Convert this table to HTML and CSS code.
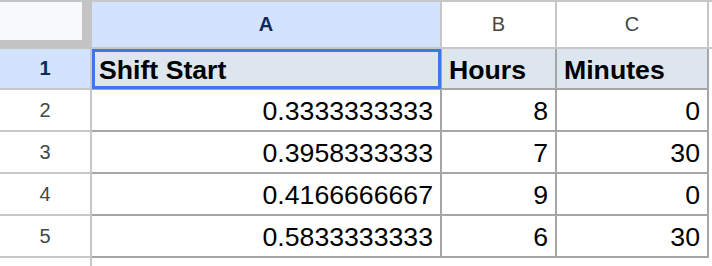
FILE: index.html
```html
<!DOCTYPE html>
<html>
<head>
<meta charset="utf-8">
<link rel="stylesheet" href="styles.css">
</head>
<body>
<div class="sheet">
  <div class="corner"><div class="corner-in"></div></div>
  <div class="ch ch-sel">A</div>
  <div class="ch">B</div>
  <div class="ch">C</div>
  <div class="ch ch-rest"></div>

  <div class="rh rh-sel">1</div>
  <div class="cell head-cell selected">Shift Start</div>
  <div class="cell head-cell">Hours</div>
  <div class="cell head-cell">Minutes</div>
  <div class="rest"></div>

  <div class="rh">2</div>
  <div class="cell num">0.3333333333</div>
  <div class="cell num">8</div>
  <div class="cell num">0</div>
  <div class="rest"></div>

  <div class="rh">3</div>
  <div class="cell num">0.3958333333</div>
  <div class="cell num">7</div>
  <div class="cell num">30</div>
  <div class="rest"></div>

  <div class="rh">4</div>
  <div class="cell num">0.4166666667</div>
  <div class="cell num">9</div>
  <div class="cell num">0</div>
  <div class="rest"></div>

  <div class="rh">5</div>
  <div class="cell num">0.5833333333</div>
  <div class="cell num">6</div>
  <div class="cell num">30</div>
  <div class="rest"></div>

  <div class="rh rh-empty"></div>
</div>
</body>
</html>
```

FILE: styles.css
```css
* { box-sizing: border-box; }
html, body { margin: 0; padding: 0; background: #ffffff; }
body { width: 712px; height: 266px; overflow: hidden; }

.sheet {
  display: grid;
  grid-template-columns: 92px 350px 115px 152px 1fr;
  grid-template-rows: 49px 41px 42px 42px 42px 42px 8px;
  font-family: "Liberation Sans", Arial, sans-serif;
}

.corner {
  background: #c4c4c4;
  padding-top: 2px;
}
.corner-in {
  width: 82px;
  height: 38px;
  background: #f8f9fa;
}

.ch {
  border-top: 2px solid #c7c7c7;
  border-right: 2px solid #c7c7c7;
  border-bottom: 2px solid #c7c7c7;
  display: flex;
  align-items: center;
  justify-content: center;
  font-size: 20px;
  color: #444746;
  background: #ffffff;
}
.ch-sel {
  background: #d3e3fd;
  color: #0b2a5e;
  font-weight: bold;
}
.ch-rest { border-right: none; }

.rh {
  border-right: 2px solid #c7c7c7;
  border-bottom: 2px solid #c7c7c7;
  display: flex;
  align-items: center;
  justify-content: center;
  font-size: 20px;
  color: #444746;
  background: #ffffff;
}
.rh-sel {
  background: #d3e3fd;
  color: #0b2a5e;
  font-weight: bold;
}
.rh-empty { border-bottom: none; }

.cell {
  border-right: 2px solid #a6a6a6;
  border-bottom: 2px solid #a6a6a6;
  display: flex;
  align-items: flex-end;
  padding: 0 7px 4px 7px;
  font-size: 26.67px;
  line-height: 30px;
  color: #000000;
  white-space: nowrap;
}
.head-cell {
  background: #dde5ee;
  font-weight: bold;
  padding-bottom: 3px;
}
.num { justify-content: flex-end; }

.selected { position: relative; }
.selected::after {
  content: "";
  position: absolute;
  left: 0;
  top: 0;
  right: -1px;
  bottom: -1px;
  border: 3px solid #3b7ae6;
}

.rest { background: #ffffff; }
```
